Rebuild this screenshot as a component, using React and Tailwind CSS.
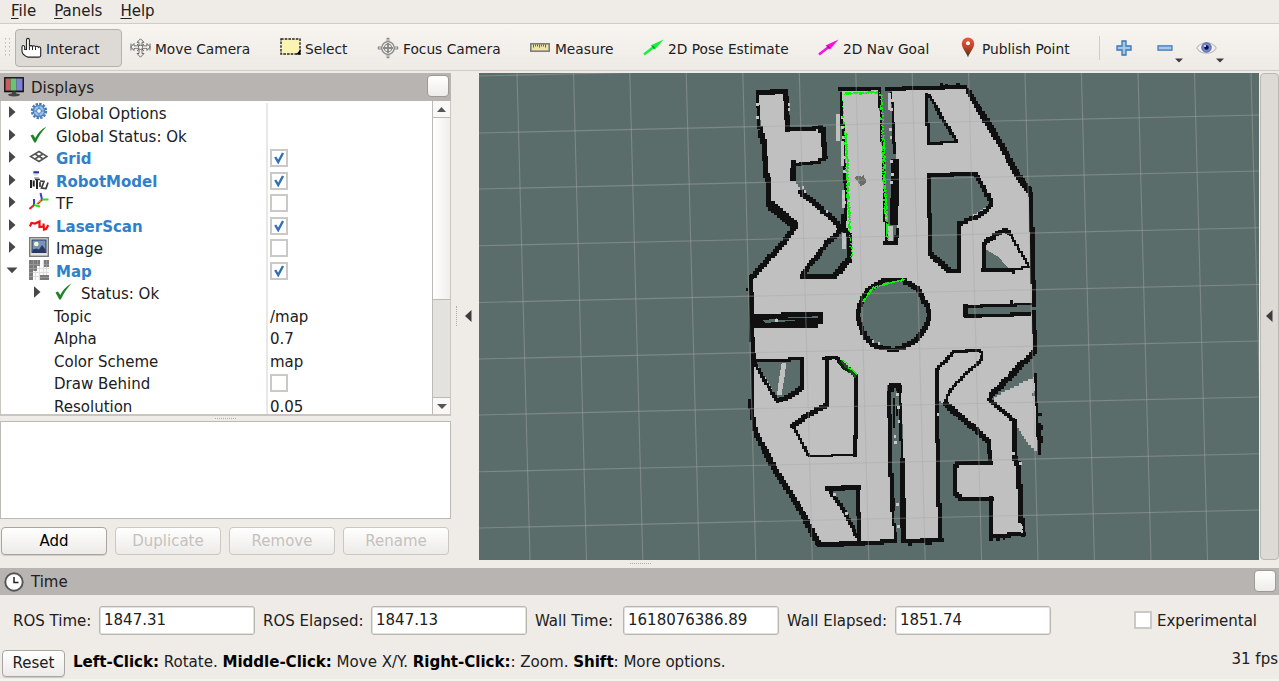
import React from "react";

const CELL = 8.4;

function noise(seed) {
  const v = Math.sin(seed * 127.1 + 311.7) * 43758.5453;
  return v - Math.floor(v);
}

// Turns a polyline into cell-aligned steps, the way an occupancy grid is rasterised.
function stair(points, closed, jitter = 0) {
  const pts = closed ? [...points, points[0]] : points;
  const out = [];
  for (let i = 0; i < pts.length - 1; i++) {
    const [x0, y0] = pts[i];
    const [x1, y1] = pts[i + 1];
    const dx = x1 - x0;
    const dy = y1 - y0;
    const minor = Math.min(Math.abs(dx), Math.abs(dy));
    const major = Math.max(Math.abs(dx), Math.abs(dy));
    const n = Math.max(1, Math.min(Math.round(major / CELL), Math.round(minor / (CELL * 0.75)) || 1));
    let px = x0;
    let py = y0;
    out.push([px, py]);
    for (let k = 1; k <= n; k++) {
      const j = k < n ? (noise(x0 + y0 * 3 + k) - 0.5) * jitter : 0;
      const nx = x0 + (dx * k) / n + j;
      const ny = y0 + (dy * k) / n + j;
      if (Math.abs(dx) > Math.abs(dy)) {
        const mid = (px + nx) / 2;
        out.push([mid, py], [mid, ny], [nx, ny]);
      } else {
        const mid = (py + ny) / 2;
        out.push([px, mid], [nx, mid], [nx, ny]);
      }
      px = nx;
      py = ny;
    }
  }
  return out.map(([x, y], i) => (i ? "L" : "M") + x.toFixed(1) + " " + y.toFixed(1)).join("") + (closed ? "Z" : "");
}

const FREE = [
  [72, 60], [152, 56], [152, 168], [262, 166], [270, 180], [272, 255], [240, 268], [172, 276], [176, 320], [200, 355],
  [320, 460], [332, 450], [330, 330], [322, 180], [320, 50], [432, 50], [437, 180], [447, 330], [455, 505], [487, 505],
  [482, 300], [472, 60], [472, 48], [695, 45], [700, 60], [730, 110], [795, 215], [845, 300], [880, 350], [888, 380],
  [893, 560], [897, 690], [690, 700], [690, 727], [897, 722], [900, 831], [765, 970], [765, 982], [838, 1046], [840, 1141],
  [852, 1171], [862, 1382], [775, 1387], [767, 1278], [680, 1278], [661, 1262], [663, 1176], [765, 1169], [762, 1111],
  [730, 1076], [632, 996], [612, 985], [606, 1011], [615, 1398], [507, 1401], [503, 1161], [496, 946], [480, 936],
  [466, 961], [470, 1311], [477, 1405], [250, 1416], [237, 1391], [210, 1331], [120, 1191], [65, 1081], [52, 1021],
  [55, 861], [50, 711], [48, 612], [178, 470], [180, 455], [105, 395], [100, 330], [90, 280], [85, 180], [72, 130],
];

const HOLES = [
  [[575, 60], [578, 210], [665, 205], [590, 72]],
  [[584, 305], [716, 303], [770, 392], [671, 452], [671, 594], [645, 594], [586, 540]],
  [[320, 463], [345, 495], [345, 560], [300, 612], [205, 612], [203, 600]],
  [[60, 866], [200, 859], [200, 945], [130, 982]],
  [[282, 1246], [368, 1242], [374, 1398]],
];

const WALLS = [
  { w: 15, p: [[72, 60], [72, 58], [152, 55], [154, 98], [158, 170]] },
  { w: 11, p: [[158, 169], [218, 169], [255, 164]] },
  { w: 16, p: [[256, 164], [265, 178], [268, 250]] },
  { w: 9, p: [[276, 254], [245, 268], [215, 272], [176, 275]] },
  { w: 17, p: [[176, 270], [174, 316]] },
  { w: 12, p: [[196, 357], [250, 400], [322, 465]] },
  { w: 9, p: [[68, 60], [72, 140], [80, 185]] },
  { w: 15, p: [[78, 178], [88, 215], [92, 300], [102, 325], [102, 394]] },
  { w: 19, p: [[104, 394], [140, 425], [180, 458]] },
  { w: 12, p: [[178, 465], [150, 505], [50, 612]] },
  { w: 13, p: [[48, 612], [50, 715], [50, 770], [55, 830], [57, 865]] },
  { w: 11, p: [[322, 465], [260, 530], [203, 604]] },
  { w: 15, p: [[203, 612], [298, 612]] },
  { w: 14, p: [[300, 608], [322, 582], [344, 560], [344, 490], [326, 468], [326, 430]] },
  { w: 8, p: [[318, 60], [320, 110], [326, 200], [328, 300], [332, 350], [332, 440]] },
  { w: 11, p: [[314, 49], [372, 48], [432, 47]] },
  { w: 7, p: [[434, 55], [438, 150], [446, 260], [448, 380], [455, 508]] },
  { w: 10, p: [[450, 510], [483, 510], [487, 470]] },
  { w: 24, p: [[480, 270], [481, 330], [478, 445]] },
  { w: 8, p: [[468, 60], [474, 120], [475, 180], [479, 240]] },
  { w: 12, p: [[456, 47], [560, 46], [690, 43]] },
  { w: 11, p: [[698, 52], [730, 105]] },
  { w: 14, p: [[730, 105], [795, 210], [845, 302], [880, 352]] },
  { w: 13, p: [[885, 350], [889, 380], [893, 560], [897, 695]] },
  { w: 8, p: [[895, 693], [790, 697], [690, 701]] },
  { w: 14, p: [[692, 700], [692, 724]] },
  { w: 11, p: [[692, 729], [780, 728], [882, 724]] },
  { w: 12, p: [[898, 718], [900, 836]] },
  { w: 13, p: [[895, 838], [830, 905], [768, 968]] },
  { w: 9, p: [[762, 980], [800, 1012], [840, 1045]] },
  { w: 14, p: [[838, 1045], [838, 1150], [850, 1180], [856, 1300], [864, 1385]] },
  { w: 12, p: [[868, 1384], [775, 1389]] },
  { w: 14, p: [[768, 1396], [768, 1276]] },
  { w: 12, p: [[772, 1278], [680, 1278], [661, 1262], [661, 1178], [672, 1170], [768, 1170]] },
  { w: 12, p: [[765, 1165], [762, 1111]] },
  { w: 13, p: [[762, 1108], [730, 1076], [632, 994]] },
  { w: 7, p: [[632, 996], [636, 970], [660, 935], [740, 862], [742, 840], [735, 833], [655, 836], [605, 893]] },
  { w: 12, p: [[605, 893], [605, 1010], [610, 1200], [614, 1395]] },
  { w: 13, p: [[620, 1401], [506, 1404]] },
  { w: 14, p: [[507, 1404], [503, 1161]] },
  { w: 7, p: [[501, 1161], [497, 1040], [495, 946]] },
  { w: 16, p: [[468, 950], [470, 938], [490, 938], [493, 952]] },
  { w: 12, p: [[462, 960], [466, 1100], [470, 1312]] },
  { w: 7, p: [[474, 1310], [482, 1400]] },
  { w: 10, p: [[482, 1404], [400, 1410], [300, 1414], [250, 1416]] },
  { w: 15, p: [[383, 1413], [256, 1414]] },
  { w: 14, p: [[250, 1412], [232, 1380], [205, 1325]] },
  { w: 13, p: [[205, 1325], [120, 1190], [64, 1082]] },
  { w: 11, p: [[64, 1085], [52, 1020], [46, 985]] },
  { w: 8, p: [[52, 1020], [53, 860]] },
  { w: 9, p: [[575, 64], [575, 100], [580, 212]] },
  { w: 8, p: [[580, 212], [660, 207]] },
  { w: 8, p: [[584, 68], [600, 95], [630, 150], [666, 205]] },
  { w: 12, p: [[582, 305], [722, 302]] },
  { w: 10, p: [[722, 304], [740, 335], [768, 385], [768, 398], [730, 430], [672, 453]] },
  { w: 13, p: [[672, 450], [672, 594], [645, 594], [586, 543]] },
  { w: 13, p: [[583, 312], [586, 543]] },
  { w: 11, p: [[747, 590], [748, 512], [790, 480], [810, 470], [824, 480]] },
  { w: 6, p: [[824, 480], [840, 510], [880, 575]] },
  { w: 10, p: [[744, 591], [835, 591]] },
  { w: 6, p: [[830, 589], [890, 582]] },
  { w: 9, p: [[60, 864], [130, 862], [198, 856]] },
  { w: 12, p: [[200, 857], [200, 945], [160, 972], [130, 982]] },
  { w: 8, p: [[62, 872], [85, 918], [128, 985]] },
  { w: 12, p: [[275, 855], [276, 992]] },
  { w: 9, p: [[266, 858], [305, 854], [330, 880], [362, 908]] },
  { w: 11, p: [[364, 908], [363, 1040], [360, 1146]] },
  { w: 7, p: [[360, 1147], [222, 1150], [212, 1130], [175, 1058]] },
  { w: 12, p: [[172, 1058], [225, 1022], [276, 995]] },
  { w: 14, p: [[278, 1246], [370, 1244]] },
  { w: 12, p: [[369, 1242], [372, 1405]] },
  { w: 9, p: [[286, 1254], [325, 1310], [366, 1390]] },
  { w: 7, p: [[902, 905], [904, 950], [907, 1040], [916, 1140]] },
  { w: 10, p: [[912, 1055], [914, 1140]] },
];

const CIRCLE = Array.from({ length: 28 }, (_, i) => {
  const a = (i / 28) * Math.PI * 2;
  const r = 105 + (noise(i * 7) - 0.5) * 7;
  return [474 + Math.cos(a) * r, 725 + Math.sin(a) * r];
});

function scatter(x0, y0, x1, y1, count, spread, seed) {
  return Array.from({ length: count }, (_, i) => {
    const t = (i + noise(seed + i)) / count;
    const x = x0 + (x1 - x0) * t + (noise(seed * 2 + i) - 0.5) * spread;
    const y = y0 + (y1 - y0) * t + (noise(seed * 3 + i) - 0.5) * 5;
    return [x, y];
  });
}

const LASER = [
  ...scatter(325, 60, 430, 56, 50, 3, 5),
  ...scatter(321, 75, 328, 180, 12, 6, 11),
  ...scatter(330, 180, 341, 440, 170, 8, 17),
  ...scatter(342, 440, 348, 555, 24, 8, 23),
  ...scatter(436, 60, 442, 200, 44, 8, 31),
  ...scatter(442, 190, 450, 420, 150, 10, 37),
  ...scatter(451, 400, 457, 500, 36, 7, 41),
  ...scatter(380, 685, 415, 640, 22, 5, 43),
  ...scatter(415, 642, 505, 617, 38, 5, 47),
];

const SPECKS = [
  [64, 90], [64, 128], [158, 90], [158, 105], [200, 340], [206, 352], [272, 412], [318, 130], [318, 160], [322, 190],
  [324, 250], [324, 290], [322, 365], [324, 385], [326, 505], [468, 78], [466, 105], [462, 165], [464, 190], [466, 260],
  [468, 300], [466, 325], [484, 960], [486, 1000], [488, 1040], [476, 1085], [478, 1105], [484, 1290], [486, 1355],
  [832, 1138], [852, 1168], [855, 1360], [857, 1370], [410, 800], [428, 808], [120, 738], [294, 1260], [330, 1318], [605, 1020],
];

function MapView() {
  const verticals = [517, 573.5, 629.8, 686.2, 742.8, 799.3, 855.8, 912.2, 968.6, 1025, 1081.4, 1138, 1194.5, 1251];
  const horizontals = [76, 133, 189, 245.8, 302.5, 359, 415, 471.8, 528];
  return (
    <svg className="block h-[487px] w-[780px] bg-[#5b6d6a]" viewBox="0 0 780 487">
      <g transform="translate(256 0) scale(0.33333)" shapeRendering="crispEdges">
        <path d={stair(FREE, true)} fill="#c0c0c0" />
        <rect x="50" y="722" width="200" height="42" fill="#101010" />
        <rect x="138" y="716" width="125" height="36" fill="#101010" />
        <path d="M85 742 L125 736 L178 732 L248 730 L248 742 L170 744 L90 750Z" fill="#5b6d6a" />
        <path d="M125 738h125M180 744h60" stroke="#101010" strokeWidth="4" />
        {HOLES.map((h, i) => (
          <path key={i} d={stair(h, true)} fill="#5b6d6a" />
        ))}
        <path d="M747 525 L770 540 L790 552 L820 585 L747 588Z" fill="#5b6d6a" />
        <path d={stair([[805, 958], [830, 945], [900, 911], [900, 955], [887, 965], [903, 975], [905, 1138], [880, 1110], [845, 1062], [838, 1040], [770, 980]], true)} fill="#c0c0c0" />
        <path d="M140 870h14l-6 45-8 50h-14l6-48z" fill="#c0c0c0" />
        <path d={stair(CIRCLE, true)} fill="#5b6d6a" stroke="#101010" strokeWidth="12" />
        <path d="M455 935h38v20l6 220 4 230h-20l-6-110-8-10z" fill="#5b6d6a" />
        {WALLS.map((wall, i) => (
          <path key={i} d={stair(wall.p, false, 4)} fill="none" stroke="#101010" strokeWidth={wall.w} strokeLinecap="square" strokeLinejoin="miter" />
        ))}
        <path d="M478 1161h18l4 240h-14l-6-95z" fill="#5b6d6a" />
        <path d="M497 1161 L500 1400M478 975v90M486 1000v30M478 1275v40" stroke="#101010" strokeWidth="6" />
        <path d="M32 645h8v8h-8zM615 30h8v12h-8zM630 32h8v10h-8zM664 30h12v12h-12zM826 680h8v14h-8zM832 590h8v12h-8zM892 560h8v30h-8zM908 1020h12v8h-12zM912 1056h12v14h-12zM912 1090h12v20h-12zM520 1408h12v10h-12zM570 1408h20v8h-20zM784 1392h10v12h-10zM804 1392h6v8h-6z" fill="#101010" />
        <path d="M304 122h10v82h-10zM458 60h10v50h-10zM320 350h10v54h-10zM322 480h10v48h-10zM318 205h8v75h-8zM460 460h14v44h-14zM850 1352h10v22h-10z" fill="#c0c0c0" />
        {SPECKS.map(([x, y], i) => (
          <rect key={i} x={x} y={y} width="8" height="9" fill="#c6c6c6" />
        ))}
        <path d="M362 308h12l4 4 8-5 2 6 5 6-2 14-14 6-8-12-8-8z" fill="#6c6c6c" />
        <path d="M320 858l18 10 28 28-4 20-30-16-16-22z" fill="#7ddb7d" opacity=".25" />
        <path d="M322 862l8 4M334 868l6 6M340 884l10 6M352 890l14 14" stroke="#19e619" strokeWidth="4" />
        <path d="M312 866l14 20 16 8" fill="none" stroke="#0a2a0a" strokeWidth="9" />
        {LASER.map(([x, y], i) => (
          <rect key={i} x={x} y={y} width="4" height="4.5" fill="#08f408" />
        ))}
      </g>
      <g stroke="#a8a8a8" strokeOpacity=".45" strokeWidth="1.1">
        {verticals.map((x) => (
          <line key={x} x1={x - 479} y1="0" x2={x - 466} y2="487" />
        ))}
        {horizontals.map((y) => (
          <line key={y} x1="0" y1={y - 73} x2="780" y2={y - 91} />
        ))}
      </g>
    </svg>
  );
}

/* ---------- icons ---------- */

const HandIcon = () => (
  <svg className="h-[22px] w-[21px]" viewBox="0 0 21 22">
    <path d="M5.500 11V3c0-2.200 2.900-2.200 2.900 0v6.500c.4-1.200 2.600-1.200 3.100 0 .6-1 2.500-.9 3 .3.700-.9 2.500-.7 2.900.5.700-.8 2.300-.3 2.300 1.100V18.500c0 1-.6 1.600-1.500 1.600H6.700C4 19 1 16.500 1 14V10c0-2 2.200-2 2.700 0v2.500h1.800z" fill="#fff" stroke="#222" strokeWidth="1.100" />
    <path d="M8.400 9.500V13M11.500 10V13M14.500 10.500V13" stroke="#222" strokeWidth="1" />
  </svg>
);
const MoveIcon = () => (
  <svg className="h-[20px] w-[21px]" viewBox="0 0 21 20" fill="#f3f1ed" stroke="#6b6b6b" strokeWidth="1">
    <path d="M10.500 .8 14 4.300H12v3C14 8 15.500 8 17 7.800V5.500l3.300 3.500L17 12.500V10.500c-2-.3-3.500 0-5 .7v4.300h2l-3.500 3.700L7 15.500h2v-4.300c-1.500-.7-3-1-5-.7v2L.700 9 4 5.500v2.300C5.500 8 7 8 9 7.300v-3H7z" />
    <path d="M7 6l7 7M14 6l-7 7" fill="none" /><circle cx="10.500" cy="9.300" r="2.200" />
    <path d="M1 5.500v7M20 5.500v7" />
  </svg>
);
const SelectIcon = () => (
  <svg className="-mt-0.5 h-[18px] w-[21px]" viewBox="0 0 21 18">
    <rect x="1" y="1" width="19" height="15" fill="#fbf3b4" stroke="#222" strokeWidth="1.400" strokeDasharray="2.600 1.100" />
    <path d="M20.500 11.500v5h-4.500z" fill="#000" />
  </svg>
);
const FocusIcon = () => (
  <svg className="h-[22px] w-[22px]" viewBox="0 0 22 22" fill="none" stroke="#8a8a8a">
    <path d="M11 .8v20.400M.8 11h20.400" strokeWidth="2.800" />
    <path d="M11 2v18M2 11h18" stroke="#e8e6e2" strokeWidth="1" />
    <circle cx="11" cy="11" r="6.300" fill="#efede9" strokeWidth="1.300" />
    <circle cx="11" cy="11" r="3.800" strokeWidth="1.200" />
    <path d="M11 6v10M6 11h10" strokeWidth="1.800" />
  </svg>
);
const RulerIcon = () => (
  <svg className="h-[9px] w-[20px]" viewBox="0 0 20 9">
    <rect x=".8" y=".8" width="18.400" height="7.400" fill="#eee3a8" stroke="#777" strokeWidth="1.500" />
    <path d="M3.500 1.500v3M5.500 1.500v2M7.500 1.500v2M9.500 1.500v3M11.500 1.500v2M13.500 1.500v2M15.500 1.500v3" stroke="#555" strokeWidth=".9" />
  </svg>
);
const ArrowIcon = ({ color, dark }) => (
  <svg className="h-[17px] w-[21px]" viewBox="0 0 21 17">
    <path d="M1 15.500L10 8.500" stroke={color} strokeWidth="2.400" />
    <path d="M20.500.5 7.500 6.500 12 10.500z" fill={color} />
    <path d="M9.500 7l2 2.500" stroke={dark} strokeWidth="1.600" />
  </svg>
);
const PinIcon = () => (
  <svg className="h-[21px] w-[14px]" viewBox="0 0 14 21">
    <defs><linearGradient id="pin" x1="0" y1="0" x2="0" y2="1"><stop offset="0" stopColor="#e85a3c" /><stop offset=".5" stopColor="#c0402a" /><stop offset="1" stopColor="#2e3a12" /></linearGradient></defs>
    <path d="M7 20.500C6 16 .8 11.500.8 6.700a6.200 6.200 0 0 1 12.400 0C13.200 11.500 8 16 7 20.500z" fill="url(#pin)" />
    <circle cx="7" cy="6.300" r="2" fill="#fff" />
  </svg>
);
const PlusIcon = () => (
  <svg className="h-4 w-4" viewBox="0 0 16 16"><path d="M6 1h4v5h5v4h-5v5H6v-5H1V6h5z" fill="#a4c8ea" stroke="#3a74b4" strokeWidth="1.300" /></svg>
);
const MinusIcon = () => (
  <svg className="h-4 w-4" viewBox="0 0 16 16"><path d="M1 5.800h14v4.400H1z" fill="#a4c8ea" stroke="#3a74b4" strokeWidth="1.200" /></svg>
);
const EyeIcon = () => (
  <svg className="h-[14px] w-[21px]" viewBox="0 0 21 14">
    <path d="M.8 7C5 0 16 0 20.200 7 16 14 5 14 .8 7z" fill="#f4f4f6" stroke="#bbb" strokeWidth="1.200" />
    <circle cx="10.500" cy="6.500" r="4.800" fill="#6f86cf" stroke="#4a5794" strokeWidth=".8" /><circle cx="10.500" cy="6.500" r="2.200" fill="#0c1030" /><circle cx="9" cy="5" r="1" fill="#e7ecff" />
  </svg>
);
const MonitorIcon = () => (
  <svg className="h-5 w-5" viewBox="0 0 20 20">
    <rect x=".8" y=".8" width="18.400" height="13.800" fill="#222" stroke="#111" strokeWidth="1.400" />
    <path d="M1.500 1.500h5v12h-5z" fill="#c95d5d" /><path d="M6.500 1.500h6v12h-6z" fill="#6cc272" /><path d="M12.500 1.500h6v12h-6z" fill="#8080d8" />
    <path d="M8 14.500h4v2.500H8z" fill="#444" /><ellipse cx="10" cy="17.800" rx="6" ry="1.600" fill="#444" />
  </svg>
);
const ClockIcon = () => (
  <svg className="h-5 w-5" viewBox="0 0 20 20"><circle cx="10" cy="10" r="8.700" fill="#fff" stroke="#555" strokeWidth="1.900" /><path d="M10 5v5.500h4.500" fill="none" stroke="#222" strokeWidth="1.500" /></svg>
);
const GearIcon = () => (
  <svg className="h-5 w-5" viewBox="0 0 20 20"><circle cx="10" cy="9" r="7" fill="none" stroke="#4478b8" strokeWidth="2.400" strokeDasharray="2.400 1.265" /><circle cx="10" cy="9" r="5.700" fill="#9cc0e8" stroke="#4f84c4" strokeWidth="1.300" /><circle cx="10" cy="9" r="2.300" fill="#fff" stroke="#4f84c4" /><path d="M10 4v3M10 11.500v3M5 9h3M12 9h3" stroke="#4f84c4" /></svg>
);
const CheckIcon = () => (
  <svg className="h-5 w-5" viewBox="0 0 20 20"><path d="M1.500 10.500 4 9.500 6.300 13C9 8 12 4.500 17.500 1.500 12.500 7 9.500 11.500 6.800 17.500H5.300z" fill="#1f8428" /></svg>
);
const GridIcon = () => (
  <svg className="h-5 w-5" viewBox="0 0 20 20"><path d="M10 4.500 18 9.500 10 14.500 1.500 9.500zM6 7l8.200 5M14 7l-8.200 5" fill="none" stroke="#555" strokeWidth="1.500" /></svg>
);
const RobotIcon = () => (
  <svg className="h-5 w-5" viewBox="0 0 20 20"><path d="M3.500 2c1-2 5.500-2 6.500 0l-1 3.500H5z" fill="#dcdce6" /><path d="M4.500 2.300H10" stroke="#22339a" strokeWidth="2" /><path d="M5 7h5v2H5z" fill="#bbb" /><path d="M2 10v8M4.700 10.500v6M8 9.500V19" stroke="#222" strokeWidth="2" /><path d="M6 9.500h5M11 11l4 .5-2.500 6.500 4.500.5 2-6M11 12v5" fill="none" stroke="#3c3c3c" strokeWidth="1.700" /></svg>
);
const TfIcon = () => (
  <svg className="h-5 w-5" viewBox="0 0 20 20" strokeWidth="2" fill="none"><path d="M5 13V7M13 7.500 11.500 1" stroke="#3838f0" /><path d="M5 13 11 14.500M13 7.500h6.500" stroke="#1ee61e" /><path d="M5 13 .5 17M13 7.500 8.500 12" stroke="#ee2222" /><path d="M6 12.500 12 8.500" stroke="#e6d630" strokeWidth=".8" /></svg>
);
const LaserIcon = () => (
  <svg className="h-5 w-5" viewBox="0 0 20 20"><path d="M.8 11.500 2.500 8 6 8.500l4.500-2V12l4-.5V8.500l.5 6 2-.5 2.300-4" fill="none" stroke="#f80d0d" strokeWidth="2.200" /></svg>
);
const ImageIcon = () => (
  <svg className="h-5 w-5" viewBox="0 0 20 20"><rect x=".7" y=".7" width="18.600" height="18.600" fill="#e3e3de" stroke="#73736f" strokeWidth="1.300" /><rect x="3" y="3" width="14" height="12.500" fill="#7794bb" stroke="#26385c" /><circle cx="7.300" cy="7" r="2.300" fill="#fbf8c8" /><path d="M3.500 15v-2.500l4-1 2.500 1L13 8l3.500 4.500v2.500z" fill="#2a3c5e" /></svg>
);
const MapIcon = () => (
  <svg className="h-5 w-5" viewBox="0 0 20 20" shapeRendering="crispEdges"><rect width="20" height="20" fill="#fafafa" /><path d="M3 8h17M3 12h17M3 16h17M6 4v16M10 4v16M14 0v20M17 4v14" stroke="#ddd" strokeWidth="1" /><path d="M0 0h11v6H8v5H4v9H0zM15 0h5v7h-5zM11 15h9v5h-9z" fill="#7a7a7a" /><path d="M0 4h11M0 8h8M0 12h4M0 16h4M4 0v11M8 0v6M15 4h5M11 17h9M17 0v7" stroke="#979797" strokeWidth="1" /></svg>
);
const Expander = ({ open }) => (
  <svg className="h-3 w-3 shrink-0" viewBox="0 0 12 12">{open ? <path d="M.5 3.500h11L6 9.200z" fill="#474747" /> : <path d="M3 .3v11.400L9.500 6z" fill="#474747" />}</svg>
);
const DropArrow = () => (
  <svg className="h-[5px] w-2" viewBox="0 0 8 5"><path d="M0 .5h8L4 4.500z" fill="#3c3c3c" /></svg>
);

function CheckBox({ checked }) {
  return (
    <span className="flex size-[18px] items-center justify-center border-2 border-[#cbc9c5] bg-white">
      {checked && <svg className="h-3 w-3" viewBox="0 0 12 12"><path d="M2.200 5 5.200 10 10 1" fill="none" stroke="#2f70b0" strokeWidth="2.400" /></svg>}
    </span>
  );
}

function Tool({ width, icon, label, active }) {
  return (
    <div className={"flex h-[38px] shrink-0 items-center " + width + (active ? " rounded-[4px] border border-[#b5b2ae] bg-[#dddad6] pl-[5px]" : "")}>
      <span className="flex w-[25px] shrink-0 justify-start">{icon}</span>
      <span className="whitespace-nowrap pt-0.5 text-[13.75px] leading-5">{label}</span>
    </div>
  );
}

const ROWS = [
  { icon: <GearIcon />, label: "Global Options" },
  { icon: <CheckIcon />, label: "Global Status: Ok" },
  { icon: <GridIcon />, label: "Grid", bold: true, check: true },
  { icon: <RobotIcon />, label: "RobotModel", bold: true, check: true },
  { icon: <TfIcon />, label: "TF", check: false },
  { icon: <LaserIcon />, label: "LaserScan", bold: true, check: true },
  { icon: <ImageIcon />, label: "Image", check: false },
  { icon: <MapIcon />, label: "Map", bold: true, check: true, open: true },
  { icon: <CheckIcon />, label: "Status: Ok", nested: true },
  { label: "Topic", value: "/map" },
  { label: "Alpha", value: "0.7" },
  { label: "Color Scheme", value: "map" },
  { label: "Draw Behind", check: false },
  { label: "Resolution", value: "0.05" },
];

function Row({ row }) {
  return (
    <div className="flex h-[22.52px] shrink-0 items-center">
      <div className={"flex h-full w-[267px] shrink-0 items-center border-r-2 border-[#e9e8e6] " + (row.nested ? "pl-[29px]" : row.icon ? "pl-1" : "pl-[53px]")}>
        {row.icon && (
          <>
            <span className="-mt-1 flex w-6 shrink-0 pl-px"><Expander open={row.open} /></span>
            <span className="-mt-1 flex w-[27px] shrink-0">{row.icon}</span>
          </>
        )}
        <span className={"whitespace-nowrap " + (row.bold ? "font-bold text-[#3080cc]" : "")}>{row.label}</span>
      </div>
      <div className="flex items-center pl-0.5">
        {row.check !== undefined ? <span className="-mt-0.5 flex"><CheckBox checked={row.check} /></span> : row.value}
      </div>
    </div>
  );
}

const PushButton = ({ label, disabled, size }) => (
  <button className={"flex items-center justify-center rounded-[4px] border bg-gradient-to-b from-white to-[#edebe8] " + size + (disabled ? " border-[#cbc8c4] text-[#c4c2bf]" : " border-[#a9a6a2] shadow-[0_1px_0_#d0cdc9]")}>{label}</button>
);

const Field = ({ label, value, labelWidth }) => (
  <div className="flex shrink-0 items-center">
    <span className={"shrink-0 whitespace-nowrap pt-0.5 " + labelWidth}>{label}</span>
    <div className="flex h-[29px] w-[156px] shrink-0 items-center rounded-[3px] border border-[#b9b6b2] bg-white pl-1 shadow-[inset_0_0_0_1px_#e3e1de]">{value}</div>
  </div>
);

const FloatButton = () => <span className="size-[22px] rounded-[4px] border border-[#9d9a96] bg-gradient-to-b from-white to-[#eeece9]" />;

export default function App() {
  return (
    <div className="flex h-[681px] w-[1279px] flex-col overflow-hidden bg-[#efebe6] font-['DejaVu_Sans',sans-serif] text-[15px] leading-5 text-[#202020]">
      <nav className="flex h-[23px] shrink-0 items-center gap-[18px] pb-0.5 pl-[11px]">
        <span><u className="underline-offset-2">F</u>ile</span>
        <span><u className="underline-offset-2">P</u>anels</span>
        <span><u className="underline-offset-2">H</u>elp</span>
      </nav>

      <div className="flex h-12 shrink-0 items-center border-y border-[#cfccc8] bg-gradient-to-b from-[#f8f5f1] to-[#eeebe6] pt-px">
        <svg className="h-[22px] w-[15px] shrink-0" viewBox="0 0 15 22"><path d="M5.500 1v20M9.500 1v20" stroke="#bcb9b5" strokeDasharray="1.500 2.500" /></svg>
        <Tool width="w-[107px] mr-2" icon={<HandIcon />} label="Interact" active />
        <Tool width="w-[150px]" icon={<MoveIcon />} label="Move Camera" />
        <Tool width="w-[98px]" icon={<SelectIcon />} label="Select" />
        <Tool width="w-[152px]" icon={<span className="-ml-px"><FocusIcon /></span>} label="Focus Camera" />
        <Tool width="w-[113px]" icon={<RulerIcon />} label="Measure" />
        <Tool width="w-[175px]" icon={<ArrowIcon color="#12f23c" dark="#0a9c22" />} label="2D Pose Estimate" />
        <Tool width="w-[139px]" icon={<ArrowIcon color="#fb10d8" dark="#b1089a" />} label="2D Nav Goal" />
        <Tool width="w-[142px]" icon={<span className="pl-1"><PinIcon /></span>} label="Publish Point" />
        <span className="h-6 w-[17px] shrink-0 border-l border-[#cfccc8]" />
        <PlusIcon />
        <span className="ml-[25px] flex items-end"><MinusIcon /><span className="-mb-[7px] ml-0.5"><DropArrow /></span></span>
        <span className="ml-[13px] flex items-end"><EyeIcon /><span className="-mb-[8px] -ml-px"><DropArrow /></span></span>
      </div>

      <main className="flex h-[497px] shrink-0 pt-0.5">
        <section className="flex w-[451px] shrink-0 flex-col">
          <header className="flex h-7 shrink-0 items-center justify-between bg-[#b8b4b1] pl-1 pr-0.5">
            <span className="flex items-center gap-[7px]"><MonitorIcon /><span className="pt-px">Displays</span></span>
            <span className="-mt-[3px] flex"><FloatButton /></span>
          </header>
          <div className="flex h-[315px] shrink-0 border-b-2 border-l border-[#c9c6c2] border-r bg-white">
            <div className="flex min-w-0 flex-1 flex-col overflow-hidden pt-0.5">
              {ROWS.map((row) => <Row key={row.label} row={row} />)}
            </div>
            <div className="flex w-[18px] shrink-0 flex-col border-l border-[#bdbab6] bg-[#e3e2df]">
              <span className="flex h-[17px] items-center justify-center border-b border-[#bdbab6] bg-[#f9f8f7]"><svg className="h-[5px] w-[9px]" viewBox="0 0 9 5"><path d="M4.500 0 9 5H0z" fill="#555" /></svg></span>
              <span className="h-[182px] border-b border-[#bdbab6] bg-gradient-to-r from-white to-[#efeeeb]" />
              <span className="flex-1" />
              <span className="flex h-[17px] items-center justify-center border-t border-[#bdbab6] bg-[#f9f8f7]"><svg className="h-[5px] w-[10px]" viewBox="0 0 10 5"><path d="M0 0h10L5 5z" fill="#555" /></svg></span>
            </div>
          </div>
          <div className="flex h-[5px] shrink-0 items-center justify-center"><span className="w-[21px] border-t border-dotted border-[#b0ada9]" /></div>
          <div className="h-[98px] shrink-0 border border-[#bdbab6] bg-white" />
          <div className="flex gap-2 pl-px pt-2">
            <PushButton label="Add" size="h-7 w-[106px] text-black" />
            <PushButton label="Duplicate" size="h-7 w-[106px]" disabled />
            <PushButton label="Remove" size="h-7 w-[106px]" disabled />
            <PushButton label="Rename" size="h-7 w-[106px]" disabled />
          </div>
        </section>
        <div className="flex h-[487px] w-7 shrink-0 items-center pb-0.5 pl-[5px]">
          <span className="h-5 w-2 border-l border-dotted border-[#b0ada9]" />
          <svg className="h-3 w-2" viewBox="0 0 8 12"><path d="M7.500 0v12L1 6z" fill="#3c3c3c" /></svg>
        </div>
        <div className="flex w-[780px] shrink-0 flex-col">
          <MapView />
          <span className="ml-[151px] mt-[3px] w-[21px] border-t border-dotted border-[#b0ada9]" />
        </div>
        <div className="ml-px flex h-[487px] flex-1 items-center justify-center rounded-[4px] border border-[#bbb8b4] bg-[#dddad6] pb-0.5">
          <svg className="h-3 w-2" viewBox="0 0 8 12"><path d="M6.500 0v12L0 6z" fill="#3c3c3c" /></svg>
        </div>
      </main>

      <section className="flex flex-1 flex-col border-b-2 border-[#f3f5f0]">
        <header className="flex h-[27px] shrink-0 items-center justify-between bg-[#b8b4b1] pl-1 pr-[3px]">
          <span className="flex items-center gap-[7px]"><ClockIcon /><span className="pt-px">Time</span></span>
          <span className="-mt-0.5 flex"><FloatButton /></span>
        </header>
        <div className="flex h-[50px] shrink-0 items-center pl-[13px]">
          <Field label="ROS Time:" value="1847.31" labelWidth="w-[86px]" />
          <span className="w-2" />
          <Field label="ROS Elapsed:" value="1847.13" labelWidth="w-[108px]" />
          <span className="w-2" />
          <Field label="Wall Time:" value="1618076386.89" labelWidth="w-[88px]" />
          <span className="w-2" />
          <Field label="Wall Elapsed:" value="1851.74" labelWidth="w-[108px]" />
          <span className="ml-[83px] flex items-center gap-[5px]"><CheckBox /><span className="pt-0.5">Experimental</span></span>
        </div>
        <div className="flex h-[34px] shrink-0 items-center pl-[2px]">
          <PushButton label="Reset" size="mt-0.5 h-[27px] w-[63px]" />
          <p className="ml-2 flex-1 whitespace-nowrap text-[15.080px] tracking-[-0.002em]">
            <b className="text-black">Left-Click:</b> Rotate. <b className="text-black">Middle-Click:</b> Move X/Y. <b className="text-black">Right-Click:</b>: Zoom. <b className="text-black">Shift</b>: More options.
          </p>
          <span className="-mt-1.5 pr-px">31 fps</span>
        </div>
      </section>
    </div>
  );
}
